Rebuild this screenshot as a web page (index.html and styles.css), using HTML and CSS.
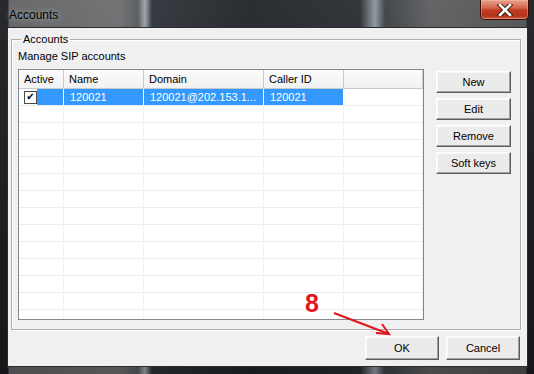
FILE: index.html
```html
<!DOCTYPE html>
<html lang="en">
<head>
    <meta charset="UTF-8">
    <title>Accounts</title>
    <link rel="stylesheet" href="styles.css">
</head>
<body>
    <div class="window">
        <div class="titlebar">
            <span class="title">Accounts</span>
            <button class="close" title="Close">
                <svg width="16" height="12" viewBox="0 0 16 12">
                    <path d="M3 1 L13 11 M13 1 L3 11" stroke="#3a1a14" stroke-width="4.5" stroke-linecap="square"/>
                    <path d="M3 1 L13 11 M13 1 L3 11" stroke="#fff" stroke-width="2.6" stroke-linecap="square"/>
                </svg>
            </button>
        </div>

        <div class="client">
            <fieldset class="group">
                <legend>Accounts</legend>
                <div class="hint">Manage SIP accounts</div>
                <div class="group-body">
                    <div class="listview">
                        <table>
                            <colgroup>
                                <col style="width:45px">
                                <col style="width:80px">
                                <col style="width:120px">
                                <col style="width:80px">
                                <col style="width:79px">
                                <col>
                            </colgroup>
                            <thead>
                                <tr>
                                    <th>Active</th>
                                    <th>Name</th>
                                    <th>Domain</th>
                                    <th>Caller ID</th>
                                    <th></th>
                                    <th class="filler"></th>
                                </tr>
                            </thead>
                            <tbody>
                                <tr class="selected">
                                    <td class="check-cell"><span class="checkbox">&#10004;</span></td>
                                    <td class="sel">120021</td>
                                    <td class="sel">120021@202.153.1...</td>
                                    <td class="sel">120021</td>
                                    <td></td>
                                    <td class="filler"></td>
                                </tr>
                                <tr><td></td><td></td><td></td><td></td><td></td><td class="filler"></td></tr>
                                <tr><td></td><td></td><td></td><td></td><td></td><td class="filler"></td></tr>
                                <tr><td></td><td></td><td></td><td></td><td></td><td class="filler"></td></tr>
                                <tr><td></td><td></td><td></td><td></td><td></td><td class="filler"></td></tr>
                                <tr><td></td><td></td><td></td><td></td><td></td><td class="filler"></td></tr>
                                <tr><td></td><td></td><td></td><td></td><td></td><td class="filler"></td></tr>
                                <tr><td></td><td></td><td></td><td></td><td></td><td class="filler"></td></tr>
                                <tr><td></td><td></td><td></td><td></td><td></td><td class="filler"></td></tr>
                                <tr><td></td><td></td><td></td><td></td><td></td><td class="filler"></td></tr>
                                <tr><td></td><td></td><td></td><td></td><td></td><td class="filler"></td></tr>
                                <tr><td></td><td></td><td></td><td></td><td></td><td class="filler"></td></tr>
                                <tr><td></td><td></td><td></td><td></td><td></td><td class="filler"></td></tr>
                                <tr><td></td><td></td><td></td><td></td><td></td><td class="filler"></td></tr>
                            </tbody>
                        </table>
                    </div>
                    <div class="side-buttons">
                        <button class="btn">New</button>
                        <button class="btn">Edit</button>
                        <button class="btn">Remove</button>
                        <button class="btn">Soft keys</button>
                    </div>
                </div>
            </fieldset>

            <div class="footer">
                <button class="btn btn-wide">OK</button>
                <button class="btn btn-wide">Cancel</button>
            </div>
        </div>

        <!-- red annotation drawn over the dialog -->
        <div class="annotation">
            <span class="step">8</span>
            <svg class="arrow" width="70" height="30" viewBox="0 0 70 30">
                <path d="M2 2 L57 23" stroke="#e0141c" stroke-width="2" fill="none"/>
                <path d="M44 22 L57 23 L50 13" stroke="#e0141c" stroke-width="2" fill="none"/>
            </svg>
        </div>
    </div>
</body>
</html>
```

FILE: styles.css
```css
body {
    margin: 0;
    background: #111;
    font-family: "Liberation Sans", Arial, sans-serif;
    font-size: 11px;
}
.window {
    position: relative;
    width: 534px;
    height: 374px;
    box-sizing: border-box;
    padding: 0 6px 7px 7px;
    display: flex;
    flex-direction: column;
    background:
        linear-gradient(to bottom, rgba(255,255,255,0.06), rgba(0,0,0,0.2)),
        linear-gradient(to right, #1a1c1f 0, #1a1c1f 8px, #5e6062 9px, #6a6c6e 120px, #55585b 138px, #9aa3aa 145px, #2b3036 152px, #1e2226 250px, #262a2f 360px, #8d969e 375px, #3a3d40 385px, #5a5c5e 430px, #4d4f51 526px, #1a1c1f 527px);
}
.titlebar {
    height: 27px;
    display: flex;
    align-items: flex-start;
    justify-content: space-between;
}
.title {
    padding: 8px 0 0 2px;
    font-size: 12px;
    color: #000;
    text-shadow: 0 0 6px rgba(255,255,255,0.6);
}
.close {
    width: 49px;
    height: 20px;
    margin-right: -1px;
    padding: 0;
    display: flex;
    align-items: center;
    justify-content: center;
    border: 1px solid #3b0f08;
    border-top: none;
    border-radius: 0 0 5px 5px;
    background: linear-gradient(to bottom, #e7a390 0, #d5664d 40%, #c23a1f 55%, #b1341b 85%, #d7694c 100%);
    box-shadow: inset 0 0 0 1px rgba(255,200,180,0.35);
}
.client {
    flex: 1;
    border: 1px solid #2a2c2e;
    background: #f0f0f0;
    display: flex;
    flex-direction: column;
}
.group {
    margin: 5px 6px 0 3px;
    padding: 0 8px 9px 6px;
    border: 1px solid #aeaeae;
    box-shadow: inset 1px 1px 0 #fff, 1px 1px 0 #fff;
}
.group legend {
    padding: 0 2px;
    margin-left: 3px;
    line-height: 13px;
    color: #000;
}
.hint {
    margin-top: 4px;
    line-height: 13px;
}
.group-body {
    display: flex;
    margin-top: 6px;
}
.listview {
    width: 406px;
    height: 251px;
    box-sizing: border-box;
    border: 1px solid #828790;
    background: #fff;
    overflow: hidden;
}
.listview table {
    width: 100%;
    table-layout: fixed;
    border-collapse: separate;
    border-spacing: 0;
}
.listview th {
    height: 19px;
    box-sizing: border-box;
    padding: 0 5px;
    text-align: left;
    font-weight: normal;
    background: linear-gradient(to bottom, #fbfbfb, #f2f2f2);
    border-right: 1px solid #c9c9c9;
    border-bottom: 1px solid #c9c9c9;
    white-space: nowrap;
}
.listview td {
    height: 17px;
    box-sizing: border-box;
    padding: 0 6px;
    border-right: 1px solid #f2f2f2;
    border-bottom: 1px solid #ededed;
    white-space: nowrap;
    overflow: hidden;
}
.listview th.filler {
    border-right: none;
}
.listview td.filler {
    border-right: none;
}
.listview tr.selected td.sel {
    background: #3399ff;
    color: #fff;
    border-right-color: #fff;
}
.listview td.check-cell {
    padding: 0 0 0 5px;
    background: linear-gradient(to right, #fff 0, #fff 18px, #3399ff 18px);
    border-right-color: #fff;
}
.checkbox {
    display: inline-flex;
    width: 11px;
    height: 11px;
    align-items: center;
    justify-content: center;
    vertical-align: middle;
    border: 1px solid #4a4a4a;
    background: #fff;
    color: #000;
    font-size: 10px;
    font-weight: bold;
    font-family: "DejaVu Sans", sans-serif;
    line-height: 1;
}
.side-buttons {
    display: flex;
    flex-direction: column;
    gap: 5px;
    margin: 2px 0 0 12px;
}
.btn {
    width: 75px;
    height: 22px;
    padding: 0;
    font-family: "Liberation Sans", Arial, sans-serif;
    font-size: 11px;
    color: #000;
    background: #ebebeb;
    border: 1px solid;
    border-color: #fff #5c5c5c #5c5c5c #fff;
    box-shadow: inset -1px -1px 0 #a0a0a0, inset 1px 1px 0 #f7f7f7;
}
.footer {
    display: flex;
    justify-content: flex-end;
    gap: 7px;
    padding: 6px 7px 0 0;
}
.btn-wide {
    width: 74px;
    height: 24px;
}
.annotation {
    position: absolute;
    left: 305px;
    top: 289px;
    width: 90px;
    height: 50px;
}
.step {
    position: absolute;
    left: 0;
    top: 0;
    font-size: 25px;
    font-weight: bold;
    line-height: 28px;
    color: #e3151c;
}
.arrow {
    position: absolute;
    left: 27px;
    top: 22px;
}
```
